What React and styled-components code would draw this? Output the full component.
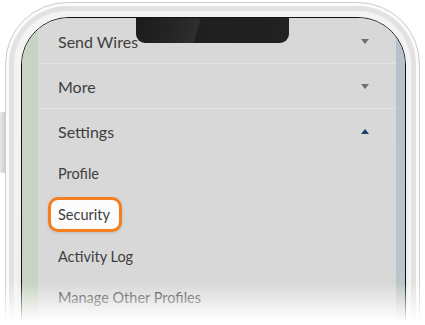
import React from "react";
import styled, { createGlobalStyle } from "styled-components";

const Global = createGlobalStyle`
  html, body {
    margin: 0;
    padding: 0;
    background: #ffffff;
    overflow: hidden;
  }
  body {
    font-family: "Lato", "Liberation Sans", sans-serif;
  }
`;

const Stage = styled("div")`
  position: relative;
  width: 425px;
  height: 325px;
  overflow: hidden;
  padding: 2px 5px 0 5px;
  box-sizing: border-box;
`;

const Phone = styled("div")`
  position: relative;
  width: 415px;
  height: 420px;
  box-sizing: border-box;
  padding: 14px 13px 0 15px;
  border-radius: 62px;
  border: 1px solid #cdcdcd;
  background: linear-gradient(180deg, #f4f4f4, #ececec);
  box-shadow: inset 0 0 0 3px #fbfbfb, inset 0 0 0 8px #e2e2e2,
    inset 0 0 0 11px #f3f3f3;
`;

const SideButton = styled("div")`
  position: absolute;
  left: -6px;
  top: 109px;
  width: 5px;
  height: 61px;
  border-radius: 2px 0 0 2px;
  background: linear-gradient(90deg, #e6e6e6, #cfcfcf);
`;

const Screen = styled("div")`
  position: relative;
  height: 100%;
  display: flex;
  border: 1.5px solid #111111;
  border-radius: 48px 48px 0 0;
  overflow: hidden;
  background: #d6d6d6;
`;

const GreenStrip = styled("div")`
  width: 16px;
  flex-shrink: 0;
  background: #c9d3c2;
`;

const BlueStrip = styled("div")`
  width: 9px;
  flex-shrink: 0;
  background: linear-gradient(180deg, #b7bfc9 0%, #bcc4ca 60%, #c3cbc2 100%);
`;

const Menu = styled("div")`
  flex: 1;
  display: flex;
  flex-direction: column;
  padding-top: 1px;
  background: #d8d8d8;
`;

const Row = styled("div")`
  height: 44px;
  display: flex;
  align-items: center;
  justify-content: space-between;
  padding: 0 27px 0 20px;
  border-bottom: ${(p) => (p.$last ? "none" : "1px solid #e2e2e2")};
  font-size: 16px;
  color: #3e3e3e;
`;

const Caret = styled("span")`
  width: 0;
  height: 0;
  border-left: 4.5px solid transparent;
  border-right: 4.5px solid transparent;
  border-top: ${(p) => (p.$up ? "none" : "5px solid #6f6f6f")};
  border-bottom: ${(p) => (p.$up ? "5px solid #1c3d70" : "none")};
`;

const SubList = styled("div")`
  display: flex;
  flex-direction: column;
`;

const SubItem = styled("div")`
  height: 41.3px;
  display: flex;
  align-items: center;
  padding-left: 20px;
  font-size: 14.5px;
  color: #3e3e3e;
`;

const Highlight = styled("span")`
  display: inline-flex;
  align-items: center;
  height: 35px;
  box-sizing: border-box;
  margin-left: -10px;
  padding: 0 9px 0 7px;
  border: 3px solid #f57f1f;
  border-radius: 10px;
  background: #fbfbfb;
  box-shadow: 0 1px 3px rgba(0, 0, 0, 0.12);
`;

const Notch = styled("div")`
  position: absolute;
  top: -1px;
  left: 114px;
  width: 153px;
  height: 26px;
  border-radius: 0 0 9px 9px;
  background: linear-gradient(
    105deg,
    #1b1b1b 0%,
    #252525 25%,
    #2e2e2e 40%,
    #1f1f1f 41%,
    #222222 100%
  );
`;

const Fade = styled("div")`
  position: absolute;
  left: 0;
  right: 0;
  bottom: 0;
  height: 42px;
  background: linear-gradient(
    180deg,
    rgba(255, 255, 255, 0) 0%,
    rgba(255, 255, 255, 0.45) 40%,
    #ffffff 92%
  );
  pointer-events: none;
`;

const sections = [
  { label: "Send Wires" },
  { label: "More" },
  { label: "Settings", open: true },
];

const subItems = ["Profile", "Security", "Activity Log", "Manage Other Profiles"];

export default function App() {
  return (
    <Stage>
      <Global />
      <Phone>
        <SideButton />
        <Screen>
          <GreenStrip />
          <Menu>
            {sections.map((s, i) => (
              <Row key={s.label} $last={i === sections.length - 1}>
                <span>{s.label}</span>
                <Caret $up={s.open} />
              </Row>
            ))}
            <SubList>
              {subItems.map((item) => (
                <SubItem key={item}>
                  {item === "Security" ? <Highlight>{item}</Highlight> : item}
                </SubItem>
              ))}
            </SubList>
          </Menu>
          <BlueStrip />
          <Notch />
        </Screen>
      </Phone>
      <Fade />
    </Stage>
  );
}
